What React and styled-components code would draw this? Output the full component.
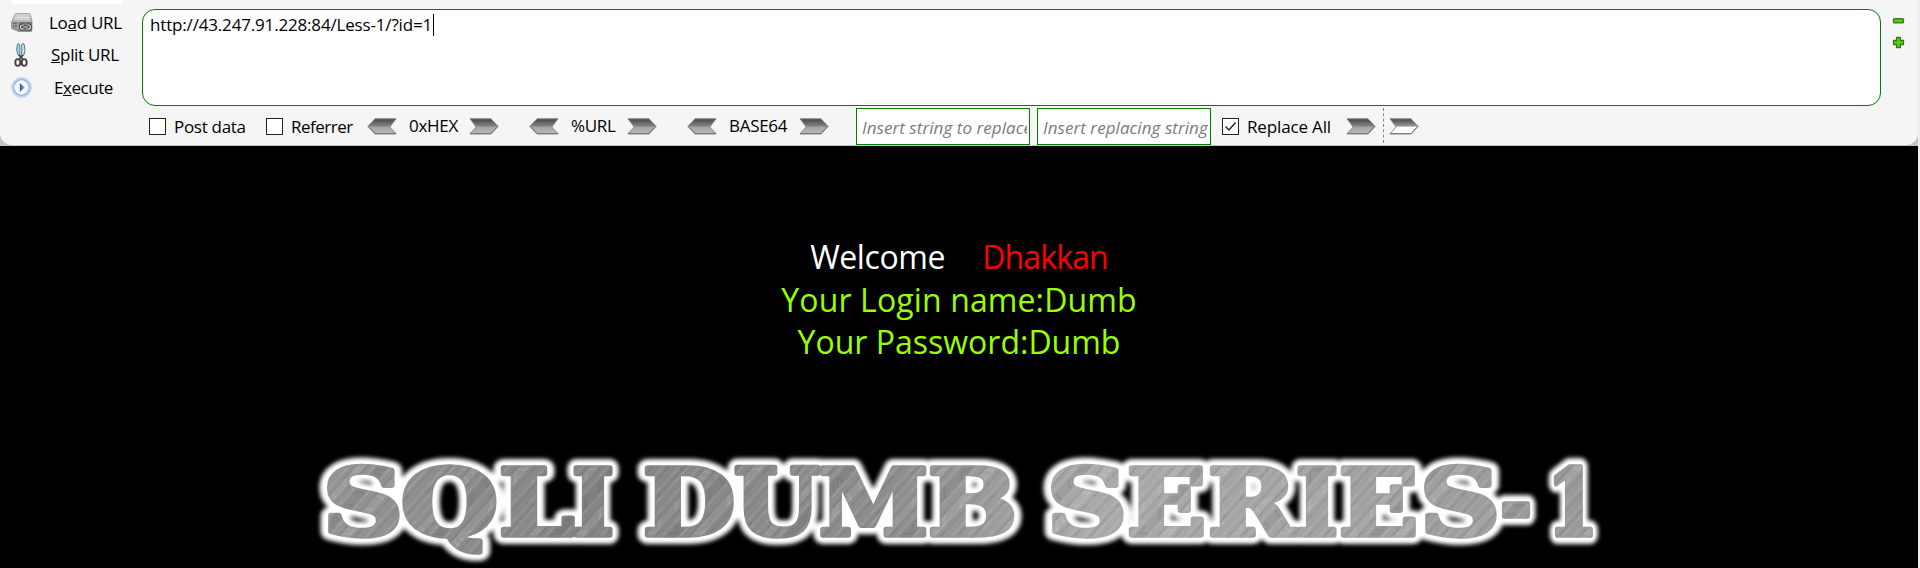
import React from "react";
import styled, { createGlobalStyle } from "styled-components";

const Global = createGlobalStyle`
  * { box-sizing: border-box; }
  body { margin: 0; background: #000; }
`;
const Page = styled.div`
  width: 1920px; height: 568px; display: flex; flex-direction: column;
  background: #000; border-right: 2px solid #eee; overflow: hidden;
  font-family: "Open Sans", "Noto Sans", sans-serif;
`;
const BarBack = styled.header`background: #c4c4c4; flex: none; height: 146px;`;
const Bar = styled.div`
  height: 145px; display: flex; background: #f5f5f5; border-radius: 0 0 12px 12px;
  color: #000; font-size: 17px; line-height: 22px;
`;
const Actions = styled.nav`
  width: 142px; flex: none; display: flex; flex-direction: column;
`;
const TabStub = styled.div`width: 111px; height: 4px; margin-left: 12px; background: #fff;`;
const Action = styled.button`
  display: flex; align-items: center; border: 0; padding: 0 0 0 11px; background: none;
  font: inherit; color: inherit; height: ${p => p.$h}px;
`;
const ActionText = styled.span`
  margin-left: ${p => p.$gap}px; letter-spacing: ${p => p.$ls}px; white-space: nowrap;
`;
const Main = styled.div`width: 1739px; flex: none; display: flex; flex-direction: column; padding-top: 9px;`;
const UrlBox = styled.div`
  height: 97px; flex: none; border: 1px solid #008000; border-radius: 13px; background: #fff;
  padding: 4px 7px; display: flex; align-items: flex-start;
`;
const UrlText = styled.span`letter-spacing: ${p => p.$ls}px; line-height: 21px;`;
const Caret = styled.i`width: 1px; height: 22px; background: #000; margin-left: 1px;`;
const Tools = styled.div`display: flex; height: 37px; margin-top: 2px; padding-left: 7px; align-items: flex-start;`;
const Box = styled.span`
  width: 17px; height: 17px; border: 1px solid #222; background: #fff; flex: none;
  margin: 10px 8px 0 ${p => p.$left || 0}px; display: flex;
`;
const Label = styled.span`
  width: ${p => p.$w}px; flex: none; white-space: nowrap; margin: ${p => p.$top || 8}px 0 0 ${p => p.$left || 0}px;
  letter-spacing: ${p => p.$ls || 0}px;
`;
const ArrowSvg = styled.svg`flex: none; margin: 10px 0 0 ${p => p.$left}px;`;
const Field = styled.input`
  width: 174px; height: 37px; flex: none; margin: 0 0 0 ${p => p.$left}px; padding: 2px 2px 0 5px;
  border: 1px solid #008000; background: #fff; font: italic 17px "Open Sans", sans-serif;
  letter-spacing: ${p => p.$ls}px; border-radius: 0; outline: 0;
  &::placeholder { color: #7b7b7b; opacity: 1; }
`;
const Divider = styled.i`height: 35px; border-left: 1px dashed #888; margin-left: 7px; flex: none;`;
const Resize = styled.div`
  display: flex; flex-direction: column; gap: 9px; padding: 15px 0 0 11px;
`;
const Content = styled.main`
  flex: 1; display: flex; flex-direction: column; align-items: center; padding-top: 90px; color: #99ff00;
`;
const Line = styled.p`
  margin: 0; height: 42.5px; line-height: 42px; font-size: 32px; white-space: pre;
  letter-spacing: ${p => p.$ls}px; display: flex; gap: 37px;
`;
const White = styled.span`color: #fff; letter-spacing: -0.4px;`;
const Red = styled.span`color: #f00; letter-spacing: -0.85px;`;
const Logo = styled.svg`display: block; margin-top: 71px; align-self: flex-start; flex: none;`;

function Arrow({ left, flip, hollow }) {
  const id = hollow ? "steelHollow" : "steel";
  return (
    <ArrowSvg $left={left} width="30" height="17" viewBox="0 0 30 17">
      <defs>
        <linearGradient id={id} x1="0" y1="0" x2="0" y2="1">
          <stop offset="0" stopColor="#444" />
          <stop offset=".5" stopColor={hollow ? "#999" : "#858585"} />
          <stop offset=".54" stopColor={hollow ? "#fff" : "#a4a4a4"} />
          <stop offset="1" stopColor={hollow ? "#fff" : "#b8b8b8"} />
        </linearGradient>
      </defs>
      <path
        transform={flip ? "translate(30 0) scale(-1 1)" : undefined}
        d="M1 .8H22L29 8.3L22 15.7H1L7.2 9Z"
        fill={`url(#${id})`} stroke="#888" strokeWidth="1"
      />
      <path transform={flip ? "translate(30 0) scale(-1 1)" : undefined} d="M1 15.8H22L29 8.3" fill="none" stroke="#707070" />
    </ArrowSvg>
  );
}

const Drive = () => (
  <svg width="22" height="20" viewBox="0 0 22 20">
    <defs><linearGradient id="drv" x2="0" y2="1"><stop stopColor="#dedede" /><stop offset="1" stopColor="#888" /></linearGradient></defs>
    <path d="M4 1.5Q4.300 .6 5.500 .6H17.500Q18.800 .6 19.200 1.600L21 8V17Q21 18.500 19.500 18.500H8L1.500 16Q.5 15.500 .5 14V9Z" fill="url(#drv)" stroke="#8c8c8c" strokeWidth=".8" />
    <path d="M5.500 2H18L19.500 7H3.500Z" fill="#cecece" />
    <path d="M6 4.500H18" stroke="#e8e8e8" />
    <path d="M1 8.500H8V17L2 15Z" fill="#999" />
    <path d="M2 10.500H6M2 13H6" stroke="#666" />
    <path d="M8 9H21V18H8Z" fill="#777" />
    <path d="M13 16H11.500Q9.500 16 9.500 14T11.500 12H13M16 12H17.500Q19.500 12 19.500 14T17.500 16H15M12.500 14H16.500" fill="none" stroke="#444" strokeWidth="2.800" />
    <path d="M13 16H11.500Q9.500 16 9.500 14T11.500 12H13M16 12H17.500Q19.500 12 19.500 14T17.500 16H15M12.500 14H16.500" fill="none" stroke="#e2e2e2" strokeWidth="1.100" />
  </svg>
);
const Scissors = () => (
  <svg width="22" height="26" viewBox="0 0 22 26">
    <path d="M6.500 2Q8 .5 8.800 3V14L7 13Q4.500 8 6.500 2Z" fill="#b5d2dc" stroke="#527d8c" />
    <path d="M13 2Q11.500 .5 10.700 3V14L13 13Q15 8 13 2Z" fill="#cfe2e8" stroke="#527d8c" />
    <path d="M8 13L12.500 18M12 13L7.500 18" stroke="#444" strokeWidth="1.800" />
    <ellipse cx="6.800" cy="20.500" rx="2.500" ry="3.400" fill="none" stroke="#444" strokeWidth="1.900" />
    <ellipse cx="13.200" cy="20.500" rx="2.500" ry="3.400" fill="none" stroke="#444" strokeWidth="1.900" />
  </svg>
);
const Play = () => (
  <svg width="22" height="22" viewBox="0 0 22 22">
    <defs><linearGradient id="ply"><stop stopColor="#2a5caa" /><stop offset="1" stopColor="#6aa2e8" /></linearGradient></defs>
    <circle cx="10.500" cy="10.500" r="9.300" fill="#fff" stroke="#c3d5f0" strokeWidth="2.200" />
    <circle cx="10.500" cy="10.500" r="7.800" fill="#f4f7fc" stroke="#93aed6" strokeWidth="1.200" />
    <path d="M8.800 6L13.600 10.500L8.800 15Z" fill="url(#ply)" />
  </svg>
);

const LETTERS = [
  [["S", 323, 80], ["Q", 401, 97], ["L", 499, 75], ["I", 572, 42]],
  [["D", 643, 92], ["U", 734, 86], ["M", 819, 109], ["B", 928, 89]],
  [["S", 1047, 80], ["E", 1127, 79], ["R", 1208, 88], ["I", 1296, 42], ["E", 1339, 79], ["S", 1420, 80], ["-", 1500, 32], ["1", 1547, 51]],
];
const Words = props => (
  <g fontFamily="DejaVu Serif" fontWeight="700" fontSize="92" strokeLinejoin="round" {...props}>
    {LETTERS.map((word, i) => (
      <text key={i} y="99.500">
        {word.map(([c, x, w], j) => (
          <tspan key={j} x={x} textLength={w} lengthAdjust="spacingAndGlyphs">{c}</tspan>
        ))}
      </text>
    ))}
  </g>
);

export default function App() {
  return (
    <Page>
      <Global />
      <BarBack>
        <Bar>
          <Actions>
            <TabStub />
            <Action $h={38}><Drive /><ActionText $gap={16} $ls={-0.3}>Lo<u>a</u>d URL</ActionText></Action>
            <Action $h={26}><Scissors /><ActionText $gap={18} $ls={-0.3}><u>S</u>plit URL</ActionText></Action>
            <Action $h={39}><Play /><ActionText $gap={21} $ls={-0.45}>E<u>x</u>ecute</ActionText></Action>
          </Actions>
          <Main>
            <UrlBox><UrlText $ls={-0.17}>http://43.247.91.228:84/Less-1/?id=1</UrlText><Caret /></UrlBox>
            <Tools>
              <Box /><Label $w={75} $ls={-0.3}>Post data</Label>
              <Box $left={17} /><Label $w={66} $ls={-0.5}>Referrer</Label>
              <Arrow left={10} flip /><Label $left={12} $w={50} $top={7} $ls={-0.3}>0xHEX</Label><Arrow left={10} />
              <Arrow left={30} flip /><Label $left={12} $w={46} $top={7} $ls={-0.35}>%URL</Label><Arrow left={10} />
              <Arrow left={30} flip /><Label $left={12} $w={60} $top={7} $ls={-0.3}>BASE64</Label><Arrow left={10} />
              <Field $left={27} $ls={0.06} placeholder="Insert string to replace" />
              <Field $left={7} $ls={0.06} placeholder="Insert replacing string" />
              <Box $left={11}><svg width="15" height="15"><path d="M2.500 7.500L6 11L12.500 3.500" fill="none" stroke="#222" strokeWidth="1.400" /></svg></Box>
              <Label $w={86} $ls={-0.15}>Replace All</Label>
              <Arrow left={13} /><Divider /><Arrow left={5} hollow />
            </Tools>
          </Main>
          <Resize>
            <svg width="13" height="12" viewBox="0 0 13 12"><rect x="1.500" y="3.700" width="10" height="4.200" rx="1" fill="#4fc914" stroke="#39751d" strokeWidth="1.300" /></svg>
            <svg width="13" height="13" viewBox="0 0 13 13"><path d="M4.600 1.500H8.400V4.500H11.500V8.500H8.400V11.500H4.600V8.500H1.500V4.500H4.600Z" fill="#55d010" stroke="#39751d" strokeWidth="1.300" strokeLinejoin="round" /></svg>
          </Resize>
        </Bar>
      </BarBack>
      <Content>
        <Line $ls={0}><White>Welcome</White><Red>Dhakkan</Red></Line>
        <Line $ls={0.12}>Your Login name:Dumb</Line>
        <Line $ls={0}>Your Password:Dumb</Line>
        <Logo width="1918" height="132" viewBox="0 0 1918 132">
          <defs>
            <filter id="glow" x="-5%" y="-20%" width="110%" height="140%"><feGaussianBlur stdDeviation="2" /></filter>
            <linearGradient id="metal" gradientUnits="userSpaceOnUse" x1="320" y1="0" x2="1600" y2="0">
              <stop offset="0" stopColor="#959595" /><stop offset=".2" stopColor="#858585" />
              <stop offset=".45" stopColor="#8e8e8e" /><stop offset=".6" stopColor="#aaa" /><stop offset="1" stopColor="#999" />
            </linearGradient>
            <pattern id="brushed" width="87" height="87" patternUnits="userSpaceOnUse" patternTransform="rotate(42)">
              <path d="M4 0V87M11 0V87M19 0V87M38 0V87M51 0V87M66 0V87M79 0V87" stroke="#fff" strokeOpacity=".12" />
              <path d="M8 0V87M24 0V87M33 0V87M58 0V87M71 0V87M83 0V87" stroke="#333" strokeOpacity=".14" />
              <path d="M28 0V87M63 0V87" stroke="#fff" strokeOpacity=".07" strokeWidth="7" />
              <path d="M45 0V87" stroke="#333" strokeOpacity=".08" strokeWidth="9" />
            </pattern>
          </defs>
          <Words fill="#fff" stroke="#fff" strokeWidth="18" filter="url(#glow)" />
          <Words fill="#fff" stroke="#fff" strokeWidth="10" aria-hidden="true" />
          <Words fill="url(#metal)" stroke="url(#metal)" strokeWidth="5.500" aria-hidden="true" />
          <Words fill="url(#brushed)" stroke="url(#brushed)" strokeWidth="5.500" aria-hidden="true" />
        </Logo>
      </Content>
    </Page>
  );
}
